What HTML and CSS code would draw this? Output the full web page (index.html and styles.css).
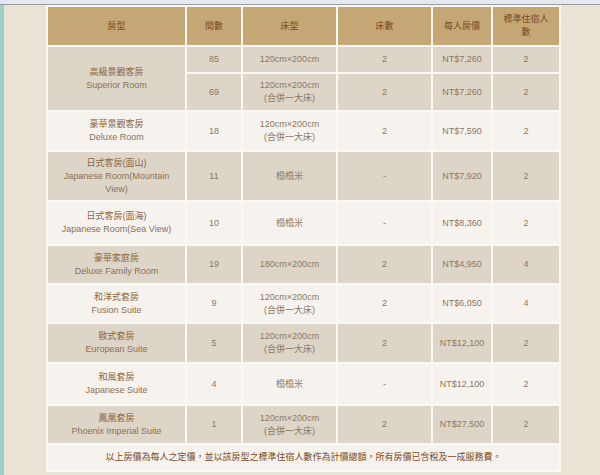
FILE: index.html
```html
<!DOCTYPE html>
<html>
<head>
<meta charset="utf-8">
<link rel="stylesheet" href="styles.css">
</head>
<body>
<div class="topbar"></div>
<div class="page">
<table class="rooms">
<colgroup>
<col class="c1"><col class="c2"><col class="c3"><col class="c4"><col class="c5"><col class="c6">
</colgroup>
<tr class="hd h38">
<th>房型</th><th>間數</th><th>床型</th><th>床數</th><th>每人房價</th><th>標準住宿人<br>數</th>
</tr>
<tr class="dk h25">
<td rowspan="2" class="nm">高級景觀客房<br><span class="en">Superior Room</span></td>
<td>85</td><td>120cm×200cm</td><td>2</td><td>NT$7,260</td><td>2</td>
</tr>
<tr class="dk h36">
<td>69</td><td>120cm×200cm<br>(合併一大床)</td><td>2</td><td>NT$7,260</td><td>2</td>
</tr>
<tr class="lt h38">
<td class="nm">豪華景觀客房<br><span class="en">Deluxe Room</span></td>
<td>18</td><td>120cm×200cm<br>(合併一大床)</td><td>2</td><td>NT$7,590</td><td>2</td>
</tr>
<tr class="dk h48">
<td class="nm">日式客房(面山)<br><span class="en">Japanese Room(Mountain<br>View)</span></td>
<td>11</td><td>榻榻米</td><td>-</td><td>NT$7,920</td><td>2</td>
</tr>
<tr class="lt h42">
<td class="nm">日式客房(面海)<br><span class="en">Japanese Room(Sea View)</span></td>
<td>10</td><td>榻榻米</td><td>-</td><td>NT$8,360</td><td>2</td>
</tr>
<tr class="dk h37">
<td class="nm">豪華家庭房<br><span class="en">Deluxe Family Room</span></td>
<td>19</td><td>180cm×200cm</td><td>2</td><td>NT$4,950</td><td>4</td>
</tr>
<tr class="lt h37">
<td class="nm">和洋式套房<br><span class="en">Fusion Suite</span></td>
<td>9</td><td>120cm×200cm<br>(合併一大床)</td><td>2</td><td>NT$6,050</td><td>4</td>
</tr>
<tr class="dk h38">
<td class="nm">歐式套房<br><span class="en">European Suite</span></td>
<td>5</td><td>120cm×200cm<br>(合併一大床)</td><td>2</td><td>NT$12,100</td><td>2</td>
</tr>
<tr class="lt h40">
<td class="nm">和風套房<br><span class="en">Japanese Suite</span></td>
<td>4</td><td>榻榻米</td><td>-</td><td>NT$12,100</td><td>2</td>
</tr>
<tr class="dk h37">
<td class="nm">鳳凰套房<br><span class="en">Phoenix Imperial Suite</span></td>
<td>1</td><td>120cm×200cm<br>(合併一大床)</td><td>2</td><td>NT$27,500</td><td>2</td>
</tr>
<tr class="lt h25">
<td colspan="6" class="note">以上房價為每人之定價，並以該房型之標準住宿人數作為計價總額，所有房價已含稅及一成服務費。</td>
</tr>
</table>
</div>
</body>
</html>
```
FILE: styles.css
```css
html, body {
  margin: 0;
  padding: 0;
  background: #e9e4d5;
}
body {
  width: 600px;
  height: 475px;
  overflow: hidden;
  font-family: "Liberation Sans", Arial, "Noto Sans CJK TC", sans-serif;
}
.topbar {
  height: 4px;
  background: #e4e8f0;
  border-bottom: 1px solid #9a9a9a;
}
.page {
  border-left: 4px solid #9fcfc4;
  height: 470px;
  background: #e9e4d5;
}
.rooms {
  margin-left: 42px;
  border-collapse: separate;
  border-spacing: 2px;
  background: #fbf9f6;
  table-layout: fixed;
  width: 515px;
  font-size: 9px;
  line-height: 13px;
}
.c1 { width: 137px; }
.c2 { width: 54px; }
.c3 { width: 93px; }
.c4 { width: 93px; }
.c5 { width: 58px; }
.c6 { width: 66px; }
.rooms th, .rooms td {
  padding: 0;
  text-align: center;
  vertical-align: middle;
  font-weight: normal;
}
.rooms td { color: #8c7862; }
.hd th {
  background: #c5a675;
  color: #7a4a1d;
}
.dk td { background: #ddd5c7; }
.lt td { background: #f6f2ee; }
.rooms td.nm { color: #8b6540; }
.en { color: #8a7156; }
.rooms td.note { color: #7a4a1d; }
.h25 td, .h25 th { height: 25px; }
.h36 td { height: 36px; }
.h37 td { height: 37px; }
.h38 td, .h38 th { height: 38px; }
.h40 td { height: 40px; }
.h42 td { height: 42px; }
.h48 td { height: 48px; }
```
